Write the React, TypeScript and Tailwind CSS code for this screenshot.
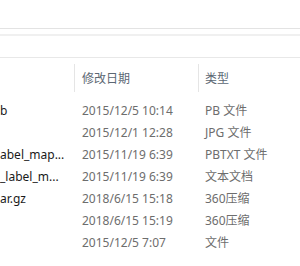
import React from "react";

const rows = [
  { name: "b", date: "2015/12/5 10:14", type: "PB 文件" },
  { name: "", date: "2015/12/1 12:28", type: "JPG 文件" },
  { name: "abel_map...", date: "2015/11/19 6:39", type: "PBTXT 文件" },
  { name: "_label_m...", date: "2015/11/19 6:39", type: "文本文档" },
  { name: "ar.gz", date: "2018/6/15 15:18", type: "360压缩" },
  { name: "", date: "2018/6/15 15:19", type: "360压缩" },
  { name: "", date: "2015/12/5 7:07", type: "文件" },
];

export default function App() {
  return (
    <div
      className="w-[300px] h-[266px] bg-white overflow-hidden text-[12px] leading-none"
      style={{ fontFamily: '"Noto Sans", "Noto Sans CJK SC", sans-serif' }}
    >
      <div className="h-[28px]" />
      <div className="h-px bg-[#e3e3e3]" />
      <div className="h-[5px]" />
      <div className="h-[2px] bg-[#f0f0f0]" />
      <div className="h-[21px]" />
      <div className="h-px bg-[#e8e8e8]" />
      <div className="h-[6px]" />
      <div className="flex h-[28px] text-[#5c6773]">
        <div className="w-[74px]" />
        <div className="w-px bg-[#e5e5e5]" />
        <div className="w-[123px] pl-[7px] pt-px flex items-center">修改日期</div>
        <div className="w-px bg-[#e5e5e5]" />
        <div className="flex-1 pl-[6px] pt-px flex items-center">类型</div>
      </div>
      <div className="h-[7px]" />
      {rows.map((r, i) => (
        <div key={i} className="flex h-[22px] items-center pt-px">
          <div className="w-[75px] whitespace-nowrap text-[#1a1a1a]">{r.name}</div>
          <div className="w-[123px] pl-[7px] whitespace-nowrap text-[#6d6d6d]">{r.date}</div>
          <div className="flex-1 pl-[7px] whitespace-nowrap text-[#6d6d6d]">{r.type}</div>
        </div>
      ))}
    </div>
  );
}
